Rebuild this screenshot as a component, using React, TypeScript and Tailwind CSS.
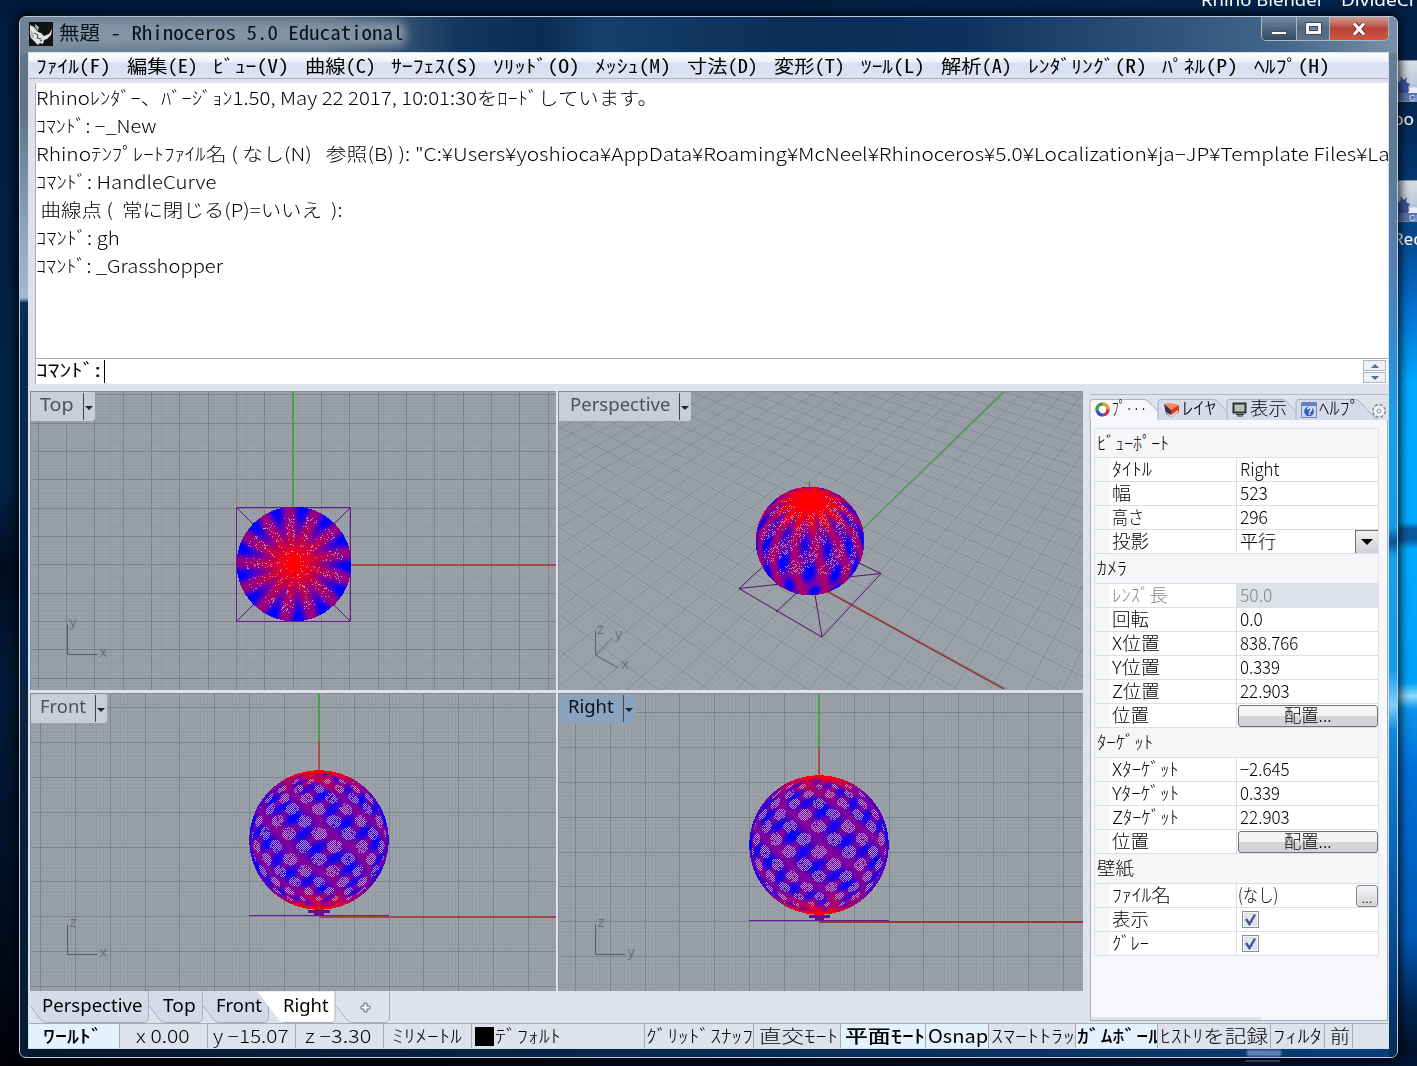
import { useLayoutEffect, useRef, useState } from "react";
import type { ReactNode } from "react";

const JP = "font-['Noto_Sans_CJK_JP',sans-serif]";

/* Text squeezed or stretched to a fixed advance width, like bitmap UI fonts */
function Fit({ w, className = "", children }: { w: number; className?: string; children: ReactNode }) {
  const ref = useRef<HTMLSpanElement>(null);
  const [scale, setScale] = useState(1);
  useLayoutEffect(() => {
    if (ref.current) setScale(w / ref.current.offsetWidth);
  }, [w]);
  return (
    <span className="inline-block shrink-0 text-left" style={{ width: w }}>
      <span
        ref={ref}
        className={"inline-block origin-left whitespace-pre " + className}
        style={{ transform: `scaleX(${scale})` }}
      >
        {children}
      </span>
    </span>
  );
}

/* ---------- sphere rasters ---------- */
type Kind = "side" | "top" | "persp";
const clamp = (v: number) => Math.max(0, Math.min(1, v));
const hash = (x: number, y: number) => {
  const s = Math.sin(x * 127.1 + y * 311.7) * 43758.5453;
  return s - Math.floor(s);
};

function spherePaths(r: number, kind: Kind, phase: number) {
  const out: Record<string, string> = {};
  const R = Math.ceil(r);
  for (let y = -R; y < R; y++) {
    let prev = "";
    let start = 0;
    for (let x = -R; x <= R; x++) {
      const nx = (x + 0.5) / r;
      const ny = -(y + 0.5) / r;
      const d2 = nx * nx + ny * ny;
      let color = "";
      if (d2 <= 1 && x < R) {
        const nz = Math.sqrt(1 - d2);
        let red = 0.5;
        let hole = false;
        if (kind === "side") {
          const lat = Math.asin(ny);
          const lon = Math.atan2(nx, nz);
          const p = 7 * lon + 8.5 * lat + phase;
          const q = 7 * lon - 8.5 * lat - phase;
          const pole = clamp((Math.abs(lat) - 0.7) / 0.85);
          const dia = Math.cos(p) ** 2 * Math.cos(q) ** 2;
          const blue = Math.sin(q) ** 2 * Math.cos(p * 0.5 + 0.7) ** 2;
          red = 0.47 - 0.42 * blue + 0.16 * Math.sin(q * 0.5 + 1) * Math.cos(p) - 0.08 * dia + pole * 0.62;
          if (d2 > 0.92) red = Math.max(red - 0.12, Math.abs(lat) - 0.35);
          hole =
            dia * (1 - pole * 1.4) > 0.22 && d2 < 0.93 &&
            ((x + y) & 1) === 0 && hash(x, y) > 0.1;
        } else if (kind === "top") {
          const rad = Math.sqrt(d2);
          const a = Math.atan2(ny, nx);
          const spoke = 0.5 + 0.5 * Math.cos(13 * (a - 1.47) + rad * 0.8);
          red = 1.08 - rad * 0.52 - Math.pow(spoke, 1.4) * rad * rad * 0.8 - rad * (1 - rad) * 0.3;
          hole = rad > 0.12 && rad < 0.86 && spoke < 0.6 && hash(x, y) > 0.91;
        } else {
          const t = 0.72;
          const py = ny * Math.cos(t) + nz * Math.sin(t);
          const pz = nz * Math.cos(t) - ny * Math.sin(t);
          const lat = Math.asin(Math.max(-1, Math.min(1, py)));
          const lon = Math.atan2(nx, pz);
          const s1 = 0.5 + 0.5 * Math.cos(13 * lon + 2.2 * lat);
          const s2 = 0.5 + 0.5 * Math.cos(10 * lon - 9 * lat + 1);
          red = 0.66 + clamp((lat - 0.75) / 0.7) * 0.6 - s1 * 0.24 - s1 * s2 * 0.6 * (1 - clamp(lat - 0.2));
          hole = d2 < 0.8 && ny > -0.6 && ((x + y) & 1) === 0 && s2 < 0.7 && hash(x, y) > 0.66 && lat < 1.25;
        }
        red = clamp(red);
        const k = Math.round(red * 12) / 12;
        const rr = Math.round(255 * Math.min(1, k * 1.02));
        const bb = k < 0.5 ? Math.round(255 - 200 * k) : Math.round(155 - 310 * (k - 0.5));
        color = hole ? (red > 0.75 ? "#e88a9e" : "#a99fd2") : `rgb(${rr},0,${Math.max(0, bb)})`;
      }
      if (color !== prev) {
        if (prev) out[prev] = (out[prev] || "") + `M${start} ${y}H${x}v1H${start}z`;
        prev = color;
        start = x;
      }
    }
    if (prev) out[prev] = (out[prev] || "") + `M${start} ${y}H${R}v1H${start}z`;
  }
  return Object.entries(out);
}

function Sphere({ cx, cy, r, kind, phase = 0 }: { cx: number; cy: number; r: number; kind: Kind; phase?: number }) {
  return (
    <g transform={`translate(${cx} ${cy})`} shapeRendering="crispEdges">
      {spherePaths(r, kind, phase).map(([c, d]) => (
        <path key={c} d={d} fill={c} />
      ))}
    </g>
  );
}

/* ---------- grids ---------- */
function OrthoGrid({ w, h, ox, oy, step }: { w: number; h: number; ox: number; oy: number; step: number }) {
  let minor = "";
  let major = "";
  const m = step / 10;
  for (let i = Math.ceil(-ox / m); ox + i * m < w; i++) {
    const x = Math.round(ox + i * m - 0.5) + 0.5;
    if (i % 10 === 0) major += `M${x} 0V${h}`;
    else minor += `M${x} 0V${h}`;
  }
  for (let i = Math.ceil(-oy / m); oy + i * m < h; i++) {
    const y = Math.round(oy + i * m - 0.5) + 0.5;
    if (i % 10 === 0) major += `M0 ${y}H${w}`;
    else minor += `M0 ${y}H${w}`;
  }
  return (
    <g fill="none">
      <path d={minor} stroke="#8c939c" strokeOpacity={0.42} />
      <path d={major} stroke="#747b85" strokeOpacity={0.8} />
    </g>
  );
}

/* Ground plane projected around the origin with two vanishing points */
const G = -0.0185;
const H = 0.0255;
function project(u: number, v: number) {
  const w = 1 + u * G + v * H;
  const x = (252 + u * G * -809 + v * H * 842) / w;
  const y = (190 + u * G * -391 + v * H * -391) / w;
  return `${x.toFixed(1)} ${y.toFixed(1)}`;
}
function planeLines(div: number, skipWhole: boolean) {
  let d = "";
  const N = 60;
  for (let i = -N * div; i <= N * div; i++) {
    if (skipWhole && i % div === 0) continue;
    const k = i / div;
    const uMax = Math.min(N, (0.85 + k * H - 0.25) / -G);
    if (uMax > -N) d += `M${project(-N, k)}L${project(uMax, k)}`;
    const vMin = Math.max(-N, (0.4 - 1 - k * G) / H);
    if (vMin < N) d += `M${project(k, vMin)}L${project(k, N)}`;
  }
  return d;
}

function Label({ children, w, pad, active = false }: { children: string; w: number; pad: number; active?: boolean }) {
  return (
    <div
      className={
        "absolute left-0 top-0 flex h-[29px] items-center rounded-br-[3px] font-['Noto_Sans',sans-serif] text-[18px] " +
        (active ? "bg-[#8ba3bf] text-[#0b0f16]" : "bg-[#c9ced5] text-[#4c5157]")
      }
      style={{ paddingLeft: pad }}
    >
      <span className="-mt-[5px]">
        <Fit w={w}>{children}</Fit>
      </span>
      <span className="ml-[9px] h-[27px] w-px bg-[#3f454c]" />
      <span className="mr-[2px] ml-px mt-[2px] border-x-4 border-t-4 border-x-transparent border-t-[#20252b]" />
    </div>
  );
}

function Axes({ x, y, v, h }: { x: number; y: number; v: string; h: string }) {
  return (
    <g stroke="#555b64" fill="none">
      <path d={`M${x} ${y - 30}V${y}H${x + 30}`} />
      <g fill="#5c626b" stroke="none" fontFamily="Noto Sans" fontSize="15" fontWeight="300">
        <text x={x + 2} y={y - 28}>{v}</text>
        <text x={x + 32} y={y + 2}>{h}</text>
      </g>
    </g>
  );
}

const VP = "relative overflow-hidden bg-[#9ba2aa] border-t border-l border-[#858c96]";

function Viewports() {
  return (
    <div className="grid h-[600px] w-[1053px] grid-cols-[526px_525px] grid-rows-[299px_298px] gap-x-[2px] gap-y-[3px]">
      <div className={VP}>
        <svg width="526" height="299" className="absolute -left-px -top-px">
          <OrthoGrid w={526} h={299} ox={263.3} oy={173.8} step={28.33} />
          <path d="M263 0V116" stroke="#45a047" strokeWidth="2" />
          <path d="M320 174H526" stroke="#a04a4c" strokeWidth="2" />
          <path d="M207 117l18 18M320 117l-18 18M207 230l18-18M320 230l-18-18" stroke="#551a72" fill="none" />
          <path d="M206.500 116.500h114v114h-114z" stroke="#6a1794" fill="none" />
          <Sphere cx={264} cy={173} r={57.3} kind="top" />
          <Axes x={37.5} y={263.5} v="y" h="x" />
        </svg>
        <Label w={34} pad={9}>Top</Label>
      </div>
      <div className={VP}>
        <svg width="525" height="299" className="absolute -left-px -top-px">
          <path d={planeLines(5, true)} stroke="#838b93" strokeOpacity=".22" strokeWidth=".7" />
          <path d={planeLines(1, false)} stroke="#717981" strokeOpacity=".58" strokeWidth=".9" />
          <path d="M250 191L447 0" stroke="#4f9a52" strokeWidth="1.5" />
          <path d="M252 191L446 298" stroke="#94383b" strokeWidth="1.6" />
          <path d="M181 197.500L264 246L323 182.500L240 143zM181 197.500L323 182.500M264 246L247 143M218 221L252 189" stroke="#551569" fill="none" />
          <path d="M251.500 90v10" stroke="#e03030" />
          <Sphere cx={252} cy={150} r={54.3} kind="persp" />
          <path d="M37.500 240v24l23 13M37.500 264l17-17" stroke="#5b616a" fill="none" />
          <g fill="#5c626b" fontFamily="Noto Sans" fontSize="15" fontWeight="300">
            <text x="39" y="243">z</text>
            <text x="57" y="248">y</text>
            <text x="63" y="278">x</text>
          </g>
        </svg>
        <Label w={100} pad={11}>Perspective</Label>
      </div>
      <div className={VP}>
        <svg width="526" height="298" className="absolute -left-px -top-px">
          <OrthoGrid w={526} h={298} ox={289.3} oy={223.7} step={34.85} />
          <path d="M289 0V48" stroke="#45a047" strokeWidth="2" />
          <path d="M289 48V78" stroke="#b0442c" strokeWidth="1.600" />
          <path d="M289 224H526" stroke="#a04a4c" strokeWidth="2" />
          <path d="M219 222.500H359" stroke="#6a1794" />
          <path d="M278 217h22v3h-6v2h-10v-2h-6z" fill="#6a0a96" />
          <Sphere cx={289} cy={147} r={69.7} kind="side" phase={-0.77} />
          <Axes x={37.500} y={261.500} v="z" h="x" />
        </svg>
        <Label w={46} pad={9}>Front</Label>
      </div>
      <div className={VP}>
        <svg width="525" height="298" className="absolute -left-px -top-px">
          <OrthoGrid w={525} h={298} ox={261.3} oy={228.7} step={34.85} />
          <path d="M261 0V54" stroke="#45a047" strokeWidth="2" />
          <path d="M261 54V84" stroke="#b0442c" strokeWidth="1.600" />
          <path d="M261 229H525" stroke="#94383b" strokeWidth="1.800" />
          <path d="M191 227.500H331" stroke="#6a1794" />
          <path d="M251 222h21v3h-6v2h-9v-2h-6z" fill="#6a0a96" />
          <Sphere cx={261} cy={152} r={69.7} kind="side" phase={0.85} />
          <Axes x={37.500} y={261.500} v="z" h="y" />
        </svg>
        <Label w={46} pad={9} active>Right</Label>
      </div>
    </div>
  );
}

/* ---------- window pieces ---------- */
const menus: [string, number, number][] = [
  ["ﾌｧｲﾙ(F)", 75, 16], ["編集(E)", 71, 15], ["ﾋﾞｭｰ(V)", 76, 16], ["曲線(C)", 71, 15],
  ["ｻｰﾌｪｽ(S)", 87, 15], ["ｿﾘｯﾄﾞ(O)", 87, 15], ["ﾒｯｼｭ(M)", 76, 16], ["寸法(D)", 71, 16],
  ["変形(T)", 71, 16], ["ﾂｰﾙ(L)", 64, 16], ["解析(A)", 71, 16], ["ﾚﾝﾀﾞﾘﾝｸﾞ(R)", 119, 15],
  ["ﾊﾟﾈﾙ(P)", 76, 16], ["ﾍﾙﾌﾟ(H)", 76, 0],
];

const logLines: [string, number][] = [
  ["Rhinoﾚﾝﾀﾞｰ、ﾊﾞｰｼﾞｮﾝ1.50, May 22 2017, 10:01:30をﾛｰﾄﾞしています。", 622],
  ["ｺﾏﾝﾄﾞ: −_New", 121],
  ["Rhinoﾃﾝﾌﾟﾚｰﾄﾌｧｲﾙ名 ( なし(N)   参照(B) ): \"C:¥Users¥yoshioca¥AppData¥Roaming¥McNeel¥Rhinoceros¥5.0¥Localization¥ja−JP¥Template Files¥La", 1354],
  ["ｺﾏﾝﾄﾞ: HandleCurve", 180],
  [" 曲線点 (  常に閉じる(P)=いいえ  ):", 307],
  ["ｺﾏﾝﾄﾞ: gh", 84],
  ["ｺﾏﾝﾄﾞ: _Grasshopper", 187],
];

function TitleBar() {
  return (
    <div className="relative flex h-[35px] items-start">
      <div className="absolute left-[14px] top-[5px] h-[24px] w-[372px] rounded-lg bg-[#8494a6] blur-[5px]" />
      <div className="relative mt-[5px] ml-[9px] h-[24px] w-[24px]">
        <svg viewBox="0 0 24 24" width="24" height="24">
          <path d="M0 0h24v24H0z" fill="#111413" />
          <path d="M1 3l4 2 4 5 3 1 3 3 5-2 3-5-1 6-4 4-3 1-1 4-3-1-2 2-3-3-4-4-1-4z" fill="#e3e6e7" />
          <path d="M6 2l4 3-1 4-3-4zM2 8l3 5-1 4-2-4z" fill="#a9afb1" />
          <path d="M5 11l4 2-1 3 4 1M11 19l2-1" stroke="#3b4042" fill="none" />
        </svg>
      </div>
      <div className={"relative mt-0 ml-[6px] text-[19px] leading-[30px] text-[#0b1118] [font-feature-settings:'hwid'] " + JP}>
        <Fit w={41}>無題</Fit>
        <Fit w={304}>{" - Rhinoceros 5.0 Educational"}</Fit>
      </div>
      <div className="absolute right-[8px] top-0 flex h-[24px] w-[128px] overflow-hidden rounded-b-[5px] border border-t-0 border-[#a9b8c8]">
        <div className="flex w-[35px] items-end justify-center border-r border-[#a9b8c8] bg-linear-to-b from-[#74899f] via-[#52687f] to-[#314964] pb-[5px]">
          <span className="h-[4px] w-[16px] border border-[#44505e] bg-white" />
        </div>
        <div className="flex w-[33px] items-center justify-center border-r border-[#a9b8c8] bg-linear-to-b from-[#74899f] via-[#52687f] to-[#5c728a]">
          <span className="flex h-[13px] w-[17px] items-center justify-center border border-[#3a4a5c] bg-[#f2f4f6]">
            <span className="h-[5px] w-[9px] border border-[#3a4a5c] bg-[#6e8299]" />
          </span>
        </div>
        <div className="flex flex-1 items-center justify-center bg-linear-to-b from-[#cf9a95] via-[#b8453b] to-[#d4553c]">
          <svg width="16" height="14" viewBox="0 0 16 14">
            <path d="M3 1.500L13 12.500M13 1.500L3 12.500" stroke="#6d2a28" strokeWidth="5" />
            <path d="M3 1.500L13 12.500M13 1.500L3 12.500" stroke="#fff" strokeWidth="3.200" />
          </svg>
        </div>
      </div>
    </div>
  );
}

function Console() {
  return (
    <div className={"flex flex-col border-l-[6px] border-[#dfe2ea] text-[18px] text-black " + JP}>
      <div className="h-[275px] overflow-hidden border-l border-[#a7adb8] bg-white font-light">
        {logLines.map(([t, w]) => (
          <div key={t} className="h-[28px] leading-[28px]">
            <Fit w={w}>{t}</Fit>
          </div>
        ))}
      </div>
      <div className="flex h-[26px] items-center border-t border-l border-[#a7adb8] bg-white leading-[24px]">
        <span className="-mt-[5px]"><Fit w={65}>ｺﾏﾝﾄﾞ:</Fit></span>
        <span className="ml-[3px] h-[23px] w-px bg-black" />
        <span className="ml-auto flex h-[23px] w-[25px] flex-col gap-px pr-[2px]">
          <span className="flex flex-1 items-center justify-center border border-[#b1b5bd] bg-[#edf0f4]">
            <span className="border-x-4 border-b-4 border-x-transparent border-b-[#566e9e]" />
          </span>
          <span className="flex flex-1 items-center justify-center border border-[#b1b5bd] bg-[#edf0f4]">
            <span className="border-x-4 border-t-4 border-x-transparent border-t-[#566e9e]" />
          </span>
        </span>
      </div>
    </div>
  );
}

function PanelTab({ w, tw, text, icon, active = false }: { w: number; tw: number; text: string; icon: ReactNode; active?: boolean }) {
  return (
    <div className="relative flex h-[21px] shrink-0 items-center pl-[5px]" style={{ width: w }}>
      <svg className="absolute left-0 top-0 overflow-visible" width={w} height="21">
        <path
          d={`M0 21V3Q0 .5 3 .5H${w - 14}Q${w - 11} .5 ${w - 9} 3L${w + 8} 21`}
          fill={active ? "#f6f7fa" : "#d6daea"}
          stroke="#a9afbf"
        />
      </svg>
      <span className="relative flex items-center gap-[2px]">
        {icon}
        <span className="-mt-[5px] leading-[20px]"><Fit w={tw} className="font-light">{text}</Fit></span>
      </span>
    </div>
  );
}

const ringIcon = (
  <svg width="15" height="15" viewBox="0 0 15 15" fill="none" strokeWidth="3">
    <circle cx="7.500" cy="7.500" r="5.500" fill="#fff" stroke="#8c3f9a" />
    <path d="M7.500 2A5.500 5.500 0 0 1 13 7.500" stroke="#f0a020" />
    <path d="M13 7.500A5.500 5.500 0 0 1 9.500 12.600" stroke="#d8303c" />
    <path d="M7.500 13A5.500 5.500 0 0 1 2.500 9" stroke="#2c55c0" />
    <path d="M2.200 9A5.500 5.500 0 0 1 7.500 2" stroke="#38a848" />
  </svg>
);
const layerIcon = (
  <svg width="17" height="16" viewBox="0 0 17 16">
    <path d="M1 2l7 4v9l-5-3z" fill="#27355e" />
    <path d="M8 6l8-3v7l-8 5z" fill="#cf3d20" />
    <path d="M1 2l6-1 9 2-8 5z" fill="#ff8552" />
    <path d="M3 10l5 3 7-5v2l-7 5-4-3z" fill="#f4dccb" />
  </svg>
);
const monitorIcon = (
  <svg width="16" height="15" viewBox="0 0 16 15">
    <path d="M1.500 1.500h12v9h-12z" fill="#b9beb9" stroke="#2b2f33" strokeWidth="2" />
    <path d="M4 12.500h8M5 14h6" stroke="#2b2f33" />
  </svg>
);
const helpIcon = (
  <svg width="16" height="16" viewBox="0 0 16 16">
    <path d="M.5 .5h15v15H.5z" fill="#cfd9f2" stroke="#7287bd" />
    <path d="M1 1h14v3H1z" fill="#5b7fd0" />
    <circle cx="8" cy="9.500" r="4.800" fill="#3358b8" />
    <text x="5.400" y="13" fontSize="10" fontWeight="bold" fill="#fff" fontFamily="Liberation Sans">?</text>
  </svg>
);

type Row = { l: string; lw: number; v?: string; vw?: number; kind?: string };
const sections: { head: string; hw: number; hh: string; rows: Row[] }[] = [
  { head: "ﾋﾞｭｰﾎﾟｰﾄ", hw: 72, hh: "h-[29px]", rows: [
    { l: "ﾀｲﾄﾙ", lw: 40, v: "Right", vw: 39 },
    { l: "幅", lw: 19, v: "523", vw: 28 },
    { l: "高さ", lw: 32, v: "296", vw: 28 },
    { l: "投影", lw: 37, v: "平行", vw: 36, kind: "combo" },
  ] },
  { head: "ｶﾒﾗ", hw: 30, hh: "h-[30px]", rows: [
    { l: "ﾚﾝｽﾞ長", lw: 56, v: "50.0", vw: 32, kind: "off" },
    { l: "回転", lw: 37, v: "0.0", vw: 23 },
    { l: "X位置", lw: 48, v: "838.766", vw: 58 },
    { l: "Y位置", lw: 48, v: "0.339", vw: 40 },
    { l: "Z位置", lw: 48, v: "22.903", vw: 50 },
    { l: "位置", lw: 37, kind: "button" },
  ] },
  { head: "ﾀｰｹﾞｯﾄ", hw: 56, hh: "h-[30px]", rows: [
    { l: "Xﾀｰｹﾞｯﾄ", lw: 67, v: "−2.645", vw: 50 },
    { l: "Yﾀｰｹﾞｯﾄ", lw: 67, v: "0.339", vw: 40 },
    { l: "Zﾀｰｹﾞｯﾄ", lw: 67, v: "22.903", vw: 50 },
    { l: "位置", lw: 37, kind: "button" },
  ] },
  { head: "壁紙", hw: 37, hh: "h-[30px]", rows: [
    { l: "ﾌｧｲﾙ名", lw: 59, v: "(なし)", vw: 40, kind: "browse" },
    { l: "表示", lw: 37, kind: "check" },
    { l: "ｸﾞﾚｰ", lw: 37, kind: "check" },
  ] },
];

function Value({ row }: { row: Row }) {
  if (row.kind === "button")
    return (
      <div className="ml-px flex h-[22px] w-[140px] shrink-0 items-center justify-center rounded-[3px] border border-[#70747a] bg-linear-to-b from-[#f4f4f4] from-50% to-[#d3d4d6] to-50%">
        <span className="-mt-[3px]"><Fit w={48}>配置...</Fit></span>
      </div>
    );
  if (row.kind === "check")
    return (
      <span className="ml-[5px] flex h-[17px] w-[17px] items-center justify-center border border-[#8e9096] bg-[#f4f5f7]">
        <svg width="13" height="13" viewBox="0 0 13 13" className="bg-[#dfe3ea]">
          <path d="M2 6l3.500 5L11 1.500" stroke="#43549a" strokeWidth="2.400" fill="none" />
        </svg>
      </span>
    );
  return (
    <>
      <span className={row.kind === "browse" ? "-mt-[3px] ml-px" : "-mt-[3px] ml-[3px]"}><Fit w={row.vw || 0}>{row.v}</Fit></span>
      {row.kind === "combo" && (
        <span className="ml-auto flex h-[23px] w-[23px] items-center justify-center border-t border-l border-[#6f7379] bg-linear-to-b from-[#f1f1f2] to-[#cfd0d3]">
          <span className="border-x-[6px] border-t-[6px] border-x-transparent border-t-black" />
        </span>
      )}
      {row.kind === "browse" && (
        <span className="ml-auto flex h-[22px] w-[22px] items-end justify-center rounded-[3px] border border-[#85888e] bg-linear-to-b from-[#f4f4f4] to-[#d3d4d6] pb-[3px] text-[14px] leading-[12px]">...</span>
      )}
    </>
  );
}

function SidePanel() {
  return (
    <div className={"mt-[3px] flex h-[627px] w-[298px] flex-col border-t border-[#b3b8c4] pt-[4px] text-[18px] text-black " + JP}>
      <div className="flex h-[21px]">
        <PanelTab w={68} tw={35} text="ﾌﾟ···" icon={ringIcon} active />
        <PanelTab w={69} tw={34} text="ﾚｲﾔ" icon={layerIcon} />
        <PanelTab w={69} tw={37} text="表示" icon={monitorIcon} />
        <PanelTab w={73} tw={41} text="ﾍﾙﾌﾟ" icon={helpIcon} />
        <svg width="16" height="16" viewBox="0 0 16 16" className="relative mt-[4px] ml-[2px] shrink-0">
          <circle cx="8" cy="8" r="6.200" fill="#f3f4f6" stroke="#8c9096" strokeWidth="1.600" strokeDasharray="3.300 1.500" />
          <circle cx="8" cy="8" r="2" fill="none" stroke="#8c9096" />
        </svg>
      </div>
      <div className="flex h-[601px] flex-col justify-between border-x border-b border-[#a4aaba] bg-[#f6f7fa]">
        <div className="mt-[8px] ml-[3px] w-[285px] border-x border-t border-[#dfe1e8] leading-[22px] font-light">
          {sections.map((s) => (
            <div key={s.head}>
              <div className={"flex items-center border-b border-[#dcdee6] bg-[#f5f6f8] pb-[3px] pl-[2px] " + s.hh}>
                <Fit w={s.hw}>{s.head}</Fit>
              </div>
              {s.rows.map((row) => (
                <div key={row.l} className="flex h-[24px] border-b border-[#dcdee6] bg-white">
                  <div className="w-[15px] bg-[#f5f6f8]" />
                  <div className={"flex w-[126px] items-center pb-[3px] pl-[2px] " + (row.kind === "off" ? "text-[#85888c]" : "")}>
                    <Fit w={row.lw}>{row.l}</Fit>
                  </div>
                  <div className={"flex flex-1 items-center border-l border-[#dcdee6] " + (row.kind === "off" ? "bg-[#dee1e8] text-[#85888c]" : "")}>
                    <Value row={row} />
                  </div>
                </div>
              ))}
            </div>
          ))}
        </div>
        <div className="h-[3px] w-[170px] bg-[#dfe2ea]" />
      </div>
    </div>
  );
}

function ViewTab({ w, tw, text, active = false }: { w: number; tw: number; text?: string; active?: boolean }) {
  const fill = active ? "#ffffff" : text ? "#d5d9ea" : "#dfe2ea";
  return (
    <div className={"relative flex h-[32px] justify-end " + (active ? "-ml-[12px]" : "")} style={{ width: w }}>
      <svg className="absolute left-0 top-0" width={w} height="32">
        <path
          d={active ? `M0 .5H${w - 1}V29L${w - 3} 31.500H26Q22 30 19 25L0 0` : `M.5 15L10 28Q13 31.500 17 31.500H${w - 4}L${w - 1} 28.500V0H.5`}
          fill={fill}
        />
        <path
          d={active ? `M${w - 1} 0V29L${w - 3} 31.500H26` : `M.5 15L10 28Q13 31.500 17 31.500H${w - 4}L${w - 0.5} 28.500V0`}
          fill="none"
          stroke="#a9aebb"
        />
      </svg>
      {text ? (
        <span className="relative mr-[7px] font-['Noto_Sans',sans-serif] text-[18px] leading-[28px] text-black"><Fit w={tw}>{text}</Fit></span>
      ) : (
        <svg width="11" height="11" viewBox="0 0 11 11" className="relative mt-[11px] mr-[19px]">
          <path d="M4 1h3v3h3v3H7v3H4V7H1V4h3z" fill="#f5f6f8" stroke="#686c73" />
        </svg>
      )}
    </div>
  );
}

const status: [string, number, number, number, boolean][] = [
  ["ﾜｰﾙﾄﾞ", 91, 14, 60, true], ["x 0.00", 88, 16, 54, false], ["y −15.07", 88, 5, 75, false],
  ["z −3.30", 88, 9, 66, false], ["ﾐﾘﾒｰﾄﾙ", 88, 8, 70, false], ["ﾃﾞﾌｫﾙﾄ", 173, 3, 66, false],
  ["ｸﾞﾘｯﾄﾞｽﾅｯﾌ", 109, 1, 107, false], ["直交ﾓｰﾄ", 87, 5, 79, false], ["平面ﾓｰﾄ", 85, 4, 80, true],
  ["Osnap", 63, 2, 60, true], ["ｽﾏｰﾄﾄﾗｯ", 87, 2, 84, false], ["ｶﾞﾑﾎﾞｰﾙ", 82, 1, 83, true],
  ["ﾋｽﾄﾘを記録", 113, 2, 108, false], ["ﾌｨﾙﾀ", 54, 2, 49, false], ["前", 28, 5, 20, false],
];

export default function App() {
  return (
    <div className="relative h-[1066px] w-[1417px] overflow-hidden bg-[linear-gradient(90deg,#00183a_0%,#001d3e_50%,#02244c_100%)]">
      <div className="absolute left-0 top-0 h-full w-[20px] bg-[linear-gradient(180deg,#001a3c_0%,#002348_45%,#000d20_53%,#001a38_64%,#001228_80%,#000208_100%)]" />
      <div className="absolute right-0 top-0 h-full w-[24px] bg-[linear-gradient(180deg,#021f45_0%,#03264f_10%,#05478c_22%,#0670d0_29%,#00a8ff_36%,#00aaff_49%,#0b5a9e_49.600%,#0b5a9e_50.600%,#00aaff_51.500%,#00a2f8_64%,#8cdcff_65.300%,#0a94ee_66.500%,#0070d8_72%,#0058b4_88%,#01204a_95%,#000c20_100%)]" />
      <div className="absolute bottom-0 left-0 h-[10px] w-full bg-linear-to-r from-[#000208] to-[#001434]" />
      <div className="absolute left-[1201px] -top-[13px] flex gap-[17px] whitespace-nowrap font-['Noto_Sans',sans-serif] text-[17px] leading-[25px] text-white">
        <Fit w={123}>Rhino Blender</Fit>
        <Fit w={76}>DivideCr</Fit>
      </div>
      {["bo", "Rec"].map((t, i) => (
        <div key={t} className={"absolute left-[1396px] w-[40px] text-white " + (i ? "top-[180px]" : "top-[60px]")}>
          <div className="relative h-[42px] overflow-hidden border-y border-[#8794a4] bg-linear-to-b from-[#dbe0e6] to-[#a4b3cb]">
            <svg width="40" height="42" viewBox="0 0 40 42">
              <path d="M2 36V22l3-3-1-4 4 4 3-3-1 5 4 2-2 4 4 9z" fill="#38549e" />
              <path d="M14 27l4-1 4 1v5H12z" fill="#e9eef5" />
              <path d="M2 32h38v10H2z" fill="#5c72ac" />
              <text x="13" y="40" fontSize="9" fill="#d4def4" fontFamily="Liberation Sans">GH</text>
            </svg>
          </div>
          <div className="-ml-[3px] mt-[4px] font-['Noto_Sans',sans-serif] text-[17px]">{t}</div>
        </div>
      ))}
      <div className="absolute left-[1245px] top-[1056px] h-[6px] w-[35px] border-b-2 border-[#4d5f86]" />

      <div className="absolute left-[19px] top-[16px] flex h-[1042px] w-[1379px] flex-col rounded-[7px] border border-[#b9cbdc] bg-[linear-gradient(180deg,#67798c_0%,#5f7286_9%,#8ba3bd_20%,#a2bcd6_27%,#0a2d52_27.500%,#082646_60%,#061b33_100%)] shadow-[0_0_9px_3px_rgba(0,0,0,0.75)]">
        <div className="absolute right-0 top-[20px] bottom-0 w-[10px] rounded-br-md bg-[linear-gradient(180deg,#687f98_0%,#60788f_8%,#557fb0_22%,#2c8fd8_32%,#18a0f0_38%,#129cec_48%,#0b5590_49.500%,#18a0f0_51%,#129cec_62%,#7fd0fa_65.500%,#0d88e0_68%,#0866b8_80%,#073f7c_93%,#062a55_100%)]" />
        <div className="absolute left-0 right-0 top-0 h-[36px] rounded-t-md bg-[linear-gradient(90deg,#718396_0%,#5c7187_22%,#12365e_32%,#0b2c53_38%,#163f6a_42%,#0b2e57_56%,#0c315c_68%,#2d5078_82%,#46678b_92%,#7a90a8_100%)]" />
        <div className="absolute bottom-0 left-2 right-2 h-[8px] bg-linear-to-r from-[#06182c] via-[#0a2a50] to-[#0b3c78]" />
        <div className="absolute bottom-[1px] left-[1227px] h-[6px] w-[34px] bg-[#5f83bd] blur-[1px]" />
        <TitleBar />
        <div className="relative ml-[8px] flex h-[997px] w-[1361px] flex-col overflow-hidden border border-[#cfe0ef] bg-[#dfe2ea]">
          <div className={"flex h-[26px] shrink-0 items-start border-b border-[#a9afbd] bg-[linear-gradient(180deg,#ffffff_0%,#eff2fa_35%,#d8dff0_40%,#dde3f4_100%)] pl-[7px] text-[18px] leading-[24px] text-black [font-feature-settings:'hwid'] " + JP}>
            {menus.map(([t, w, gap]) => (
              <span key={t} className="shrink-0" style={{ marginRight: gap }}>
                <Fit w={w}>{t}</Fit>
              </span>
            ))}
          </div>
          <div className="h-[4px] shrink-0" />
          <Console />
          <div className="mt-[7px] ml-px flex h-[600px] shrink-0 gap-[7px]">
            <Viewports />
            <SidePanel />
          </div>
          <div className="ml-px flex h-[32px] shrink-0">
            <ViewTab w={119} tw={100} text="Perspective" />
            <ViewTab w={54} tw={33} text="Top" />
            <ViewTab w={66} tw={46} text="Front" />
            <ViewTab w={79} tw={46} text="Right" active />
            <ViewTab w={54} tw={0} />
          </div>
          <div className={"flex h-[26px] shrink-0 border-t border-[#a5abb7] text-[18px] leading-[23px] text-black " + JP}>
            {status.map(([t, w, pad, tw, on]) => (
              <div
                key={t}
                className={"flex shrink-0 items-center overflow-hidden border-r border-[#a5abb7] pb-[2px] " + (on ? "bg-[#e3f2fd] font-medium" : "font-light")}
                style={{ width: w, paddingLeft: pad }}
              >
                {t === "ﾃﾞﾌｫﾙﾄ" && <span className="mt-[2px] mr-[1px] h-[19px] w-[19px] shrink-0 bg-black" />}
                <Fit w={tw} className={t === "Osnap" ? "font-normal" : ""}>{t}</Fit>
              </div>
            ))}
          </div>
        </div>
      </div>
    </div>
  );
}
